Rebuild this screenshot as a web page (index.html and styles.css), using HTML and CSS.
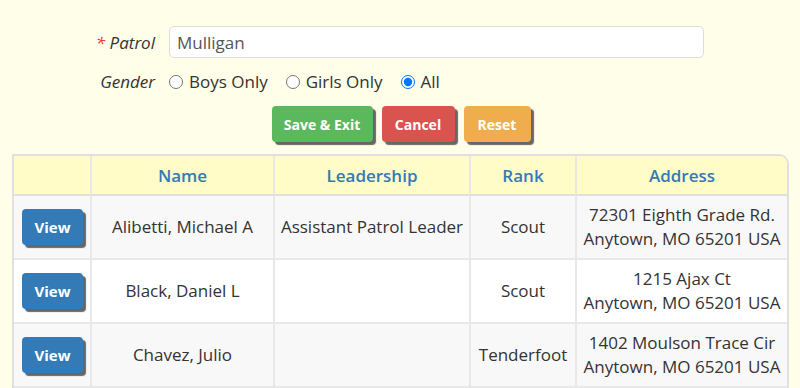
FILE: index.html
```html
<!DOCTYPE html>
<html lang="en">
<head>
    <meta charset="UTF-8">
    <title>Patrol</title>
    <link rel="stylesheet" href="styles.css">
</head>
<body>
    <!-- patrol form -->
    <form class="patrol-form">
        <div class="form-row">
            <label class="form-label"><span class="required">*</span> Patrol</label>
            <input class="text-input" type="text" value="Mulligan">
        </div>
        <div class="form-row gender-row">
            <label class="form-label">Gender</label>
            <div class="radio-group">
                <label class="radio"><input type="radio" name="gender"> Boys Only</label>
                <label class="radio"><input type="radio" name="gender"> Girls Only</label>
                <label class="radio"><input type="radio" name="gender" checked> All</label>
            </div>
        </div>
        <div class="button-row">
            <button type="button" class="btn btn-save">Save &amp; Exit</button>
            <button type="button" class="btn btn-cancel">Cancel</button>
            <button type="button" class="btn btn-reset">Reset</button>
        </div>
    </form>

    <!-- members -->
    <table class="member-table">
        <thead>
            <tr>
                <th class="col-view"></th>
                <th class="col-name">Name</th>
                <th class="col-lead">Leadership</th>
                <th class="col-rank">Rank</th>
                <th class="col-addr">Address</th>
            </tr>
        </thead>
        <tbody>
            <tr>
                <td><button type="button" class="btn btn-view">View</button></td>
                <td>Alibetti, Michael A</td>
                <td>Assistant Patrol Leader</td>
                <td>Scout</td>
                <td>72301 Eighth Grade Rd.<br>Anytown, MO 65201 USA</td>
            </tr>
            <tr>
                <td><button type="button" class="btn btn-view">View</button></td>
                <td>Black, Daniel L</td>
                <td></td>
                <td>Scout</td>
                <td>1215 Ajax Ct<br>Anytown, MO 65201 USA</td>
            </tr>
            <tr>
                <td><button type="button" class="btn btn-view">View</button></td>
                <td>Chavez, Julio</td>
                <td></td>
                <td>Tenderfoot</td>
                <td>1402 Moulson Trace Cir<br>Anytown, MO 65201 USA</td>
            </tr>
        </tbody>
    </table>
</body>
</html>
```

FILE: styles.css
```css
body {
    margin: 0;
    background: #fffee9;
    font-family: 'Open Sans', 'Noto Sans', sans-serif;
    font-size: 17px;
    color: #333;
}

/* form */
.patrol-form {
    padding-top: 26px;
}

.form-row {
    display: flex;
    align-items: center;
    gap: 14px;
}

.form-label {
    width: 155px;
    text-align: right;
    font-style: italic;
    font-size: 17px;
}

.required {
    color: #e33;
}

.text-input {
    width: 535px;
    height: 32px;
    box-sizing: border-box;
    padding: 0 7px;
    border: 1px solid #ddd;
    border-radius: 5px;
    background: #fff;
    font-family: inherit;
    font-size: 17px;
    color: #555;
}

.gender-row {
    margin-top: 12px;
}

.radio-group {
    display: flex;
    gap: 18px;
    font-size: 17px;
}

.radio {
    display: flex;
    align-items: center;
    gap: 6px;
}

.radio input {
    width: 14px;
    height: 14px;
    margin: 0;
}

.button-row {
    display: flex;
    justify-content: center;
    gap: 9px;
    margin-top: 13px;
    padding-left: 2px;
}

/* buttons */
.btn {
    border: none;
    border-radius: 4px;
    color: #fff;
    font-family: inherit;
    font-weight: 700;
    font-size: 14px;
    box-shadow: 3px 3px 1px #666;
    cursor: pointer;
}

.btn-save {
    width: 101px;
    height: 36px;
    background: #5cb85c;
}

.btn-cancel {
    width: 73px;
    height: 36px;
    background: #d9534f;
}

.btn-reset {
    width: 67px;
    height: 36px;
    background: #f0ad4e;
}

.btn-view {
    width: 61px;
    height: 36px;
    background: #337ab7;
    font-size: 15px;
}

/* table */
.member-table {
    margin: 12px 11px 0 12px;
    width: 777px;
    border-collapse: separate;
    border-spacing: 0;
    background: #fff;
    border: 2px solid #e0e0e0;
    border-bottom: none;
    border-radius: 0 10px 0 0;
}

.member-table th {
    height: 38px;
    padding: 0;
    background: #fffcc8;
    color: #337ab7;
    font-weight: 600;
    font-size: 17px;
    border-bottom: 2px solid #e0e0e0;
    border-left: 2px solid #e8e8e8;
}

.member-table th:first-child,
.member-table td:first-child {
    border-left: none;
}

.member-table th:last-child {
    border-top-right-radius: 8px;
}

.col-view { width: 76px; }
.col-name { width: 181px; }
.col-lead { width: 194px; }
.col-rank { width: 104px; }

.member-table td {
    height: 62px;
    padding: 0 2px;
    text-align: center;
    font-size: 17px;
    line-height: 24px;
    border-left: 2px solid #e8e8e8;
    border-bottom: 2px solid #e8e8e8;
}

.member-table td:first-child {
    padding: 0 0 0 8px;
    text-align: left;
}

.member-table tbody tr:nth-child(odd) td {
    background: #f8f8f8;
}
```
